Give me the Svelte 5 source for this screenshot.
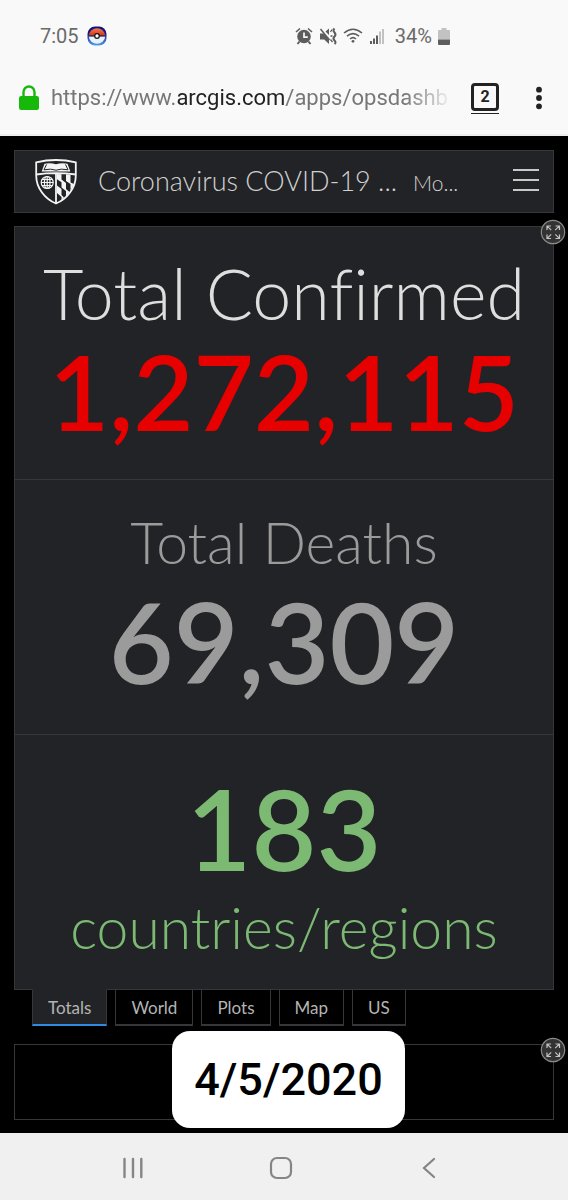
<script>
  const tabs = ['Totals', 'World', 'Plots', 'Map', 'US'];
  let active = $state('Totals');
</script>

{#snippet expandIcon()}
  <svg width="26" height="26" viewBox="0 0 26 26" fill="none" aria-hidden="true">
    <circle cx="13" cy="13" r="11.7" fill="#333" stroke="#8b8b8b" stroke-width="1.2" />
    <path
      d="M7 11V7h4M7.400 7.400l3.800 3.800M15.500 7h4v4M19 7.400l-3.800 3.800M7 15.500v4h4M7.400 19.100l3.800-3.800M19.500 15.500v4h-4M19.100 19.100l-3.800-3.800"
      stroke="#c4c4c4" stroke-width="1.2" />
  </svg>
{/snippet}

<div class="screen">
  <header class="browser">
    <div class="status">
      <span class="time">7:05</span>
      <svg class="ball" width="20" height="20" viewBox="0 0 20 20" aria-hidden="true">
        <defs>
          <linearGradient id="ring" x2="0" y2="1">
            <stop offset=".35" stop-color="#13127f" /><stop offset="1" stop-color="#4ba1ef" />
          </linearGradient>
          <linearGradient id="cap" x2="0" y2="1">
            <stop stop-color="#f47a50" /><stop offset="1" stop-color="#cb3219" />
          </linearGradient>
        </defs>
        <rect x=".5" y=".5" width="19" height="19" rx="7.500" fill="url(#ring)" />
        <path d="M1.800 10a8.200 7.800 0 0 1 16.400 0z" fill="url(#cap)" />
        <path d="M1.800 10a8.200 7.800 0 0 0 16.400 0z" fill="#e8f2fa" />
        <path d="M1.800 10h16.400" stroke="#231c38" stroke-width="1.200" />
        <circle cx="10" cy="10" r="2.300" fill="#fff" stroke="#171717" stroke-width="1.300" />
      </svg>
      <div class="indicators">
        <svg width="18" height="18" viewBox="0 0 18 18" aria-hidden="true">
          <path d="M4.500 14.500L2.500 17M13.500 14.500l2 2.500" stroke="#5d5d5d" stroke-width="2" />
          <path d="M1 5L5 1.500M13 1.500L17 5" stroke="#5d5d5d" stroke-width="1.600" />
          <circle cx="9" cy="9.500" r="6.800" fill="#5d5d5d" />
          <path d="M9 5.500v4.700h3.800" fill="none" stroke="#f8f8f8" stroke-width="1.700" />
        </svg>
        <svg width="18" height="18" viewBox="0 0 18 18" fill="none" aria-hidden="true">
          <path d="M1 6.500h3.500L10 11.500V17l-4.800-4.500H1zM6.500 4.500L10 1.500V8z" fill="#5d5d5d" />
          <path d="M1.500 2l9 11" stroke="#5d5d5d" stroke-width="1.500" />
          <path d="M15.500 1.500q-2 2 0 4t0 4 0 4 0 3.500" stroke="#5d5d5d" stroke-width="2" />
          <path d="M11.500 5l1.500-2.500M11.500 9h2M11.500 12.500l2 2.500" stroke="#5d5d5d" stroke-width="1.300" />
        </svg>
        <svg width="20" height="18" viewBox="0 0 20 18" fill="none" stroke="#5d5d5d" stroke-width="1.600" aria-hidden="true">
          <path d="M1 6q9-7.500 18 0M4 9.200q6-5.200 12 0M7 12q3-2.600 6 0" />
          <circle cx="10" cy="14.300" r="1.400" fill="#5d5d5d" stroke="none" />
        </svg>
        <svg width="16" height="18" viewBox="0 0 16 18" aria-hidden="true">
          <path d="M1 14h2v3H1zM4 11.500h2V17H4zM7 8.500h2V17H7z" fill="#5d5d5d" />
          <path d="M10 4.500h2V17h-2zM13 2h2v15h-2z" fill="#c2c2c2" />
        </svg>
        <span class="charge">34%</span>
        <svg width="12" height="18" viewBox="0 0 12 18" aria-hidden="true">
          <path d="M3.500 1h5v2H11a1 1 0 0 1 1 1v8.500H0V4a1 1 0 0 1 1-1h2.500z" fill="#c2c2c2" />
          <path d="M0 12.500h12V17a1 1 0 0 1-1 1H1a1 1 0 0 1-1-1z" fill="#5d5d5d" />
        </svg>
      </div>
    </div>
    <div class="toolbar">
      <svg width="20" height="26" viewBox="0 0 20 26" aria-hidden="true">
        <path d="M4.500 12V7a5.500 5.500 0 0 1 11 0v5" fill="none" stroke="#16b90a" stroke-width="2.400" />
        <rect y="11" width="20" height="14" rx="2.200" fill="#16b90a" />
      </svg>
      <button class="address" type="button"><span>https://www.</span><b>arcgis.com</b><span>/apps/opsdashb</span></button>
      <button class="count" type="button"><span>2</span></button>
      <button class="more" type="button" aria-label="Menu">
        <svg width="8" height="24" viewBox="0 0 8 24" fill="#222" aria-hidden="true">
          <circle cx="4" cy="3.700" r="2.900" /><circle cx="4" cy="12" r="2.900" /><circle cx="4" cy="20.300" r="2.900" />
        </svg>
      </button>
    </div>
  </header>

  <main>
    <div class="titlebar">
      <svg class="shield" width="42" height="46" viewBox="0 0 42 46" aria-hidden="true">
        <path d="M21 1C14 1 7 2 1.200 3.400v13C1.200 29 10 40 21 44.500 32 40 40.800 29 40.800 16.400v-13C35 2 28 1 21 1z" fill="#222326" stroke="#f4f4f4" stroke-width="1.800" />
        <path d="M9.500 4.700q6-1.200 11.500.500 5.500-1.700 11.500-.5L35.300 12.500H6.700z" fill="#f4f4f4" />
        <path d="M11.500 5.500L9 10.800q7-1.500 12 .4 5-1.900 12-.4l-2.500-5.300" fill="none" stroke="#222326" stroke-width="1" />
        <path d="M1.200 15.500Q21 12.600 40.800 15.500M21 14v30" fill="none" stroke="#f4f4f4" stroke-width="1.800" />
        <g fill="none" stroke="#f4f4f4" stroke-width="1.200">
          <circle cx="12.200" cy="23.500" r="6" />
          <ellipse cx="12.200" cy="23.500" rx="2.800" ry="6" />
          <path d="M12.200 17.500v12M6.200 23.500h12M7 20.500h10.400M7 26.500h10.400" />
        </g>
        <path d="M22 15l4.500.3v8l-4.500-3zM31 15.300l4.500.5V25L31 22zM26.500 20.500L31 24v8l-4.500-3.500zM35.500 23.500l3.500 1.500-3.500 7zM22 26.500l4.500 3.500v8L22 34zM31 30l3.500 3-3.500 5zM26.500 36l2.500 2.500-2.500 2.500z" fill="#f4f4f4" />
      </svg>
      <h1>Coronavirus COVID-19 ...</h1>
      <span class="subtitle">Mo...</span>
      <button class="menu" type="button" aria-label="Open menu"><i></i><i></i><i></i></button>
    </div>

    <div class="panel totals">
      <button class="expand" type="button" aria-label="Expand">{@render expandIcon()}</button>
      <section class="stat confirmed">
        <h2>Total Confirmed</h2>
        <strong>1,272,115</strong>
      </section>
      <section class="stat deaths">
        <h2>Total Deaths</h2>
        <strong>69,309</strong>
      </section>
      <section class="stat regions">
        <strong>183</strong>
        <h2>countries/regions</h2>
      </section>
    </div>

    <div class="tabs" role="tablist">
      {#each tabs as tab}
        <button type="button" role="tab" aria-selected={active === tab} class:active={active === tab} onclick={() => (active = tab)}>{tab}</button>
      {/each}
    </div>

    <div class="panel lower">
      <button class="expand" type="button" aria-label="Expand">{@render expandIcon()}</button>
      <time class="date" datetime="2020-04-05">4/5/2020</time>
    </div>
  </main>

  <nav>
    <button type="button" aria-label="Recent apps">
      <svg width="24" height="24" viewBox="0 0 24 24" stroke="#858585" stroke-width="2.400" stroke-linecap="round" aria-hidden="true"><path d="M3.500 3v18M12 3v18M20.300 3v18" /></svg>
    </button>
    <button type="button" aria-label="Home">
      <svg width="24" height="24" viewBox="0 0 24 24" fill="none" stroke="#858585" stroke-width="2.200" aria-hidden="true"><rect x="2" y="2" width="20" height="20" rx="6" /></svg>
    </button>
    <button type="button" aria-label="Back">
      <svg width="24" height="24" viewBox="0 0 24 24" fill="none" stroke="#858585" stroke-width="2.200" stroke-linecap="round" aria-hidden="true"><path d="M17 3L7 12l10 9" /></svg>
    </button>
  </nav>
</div>

<style>
  :global(body) {
    margin: 0;
    background: #000;
  }
  .screen {
    display: flex;
    flex-direction: column;
    min-height: 100vh;
    background: #000;
    font-family: Lato, sans-serif;
    font-variant-ligatures: none;
  }
  .screen :global(*) {
    box-sizing: border-box;
  }
  button {
    margin: 0;
    padding: 0;
    border: 0;
    background: none;
    font: inherit;
    color: inherit;
    cursor: pointer;
  }
  svg {
    display: block;
    flex: none;
  }
  .browser {
    background: #f9f9f9;
    border-bottom: 2px solid #eee;
    font-family: Roboto, sans-serif;
  }
  .status {
    display: flex;
    align-items: center;
    height: 60px;
    padding: 12px 118px 0 40px;
    color: #6a6a6a;
    font-size: 20px;
  }
  .ball {
    margin-left: 8px;
  }
  .indicators {
    display: flex;
    align-items: center;
    gap: 6px;
    margin-left: auto;
  }
  .charge {
    margin-left: 4px;
  }
  .toolbar {
    display: flex;
    align-items: center;
    height: 74px;
    padding: 2px 25px 0 19px;
  }
  .address {
    flex: 1;
    min-width: 0;
    margin: 0 18px 0 12px;
    overflow: hidden;
    white-space: nowrap;
    text-align: left;
    font-size: 22px;
    line-height: 32px;
    color: #777;
    mask-image: linear-gradient(to right, #000 calc(100% - 48px), transparent);
  }
  .address b {
    font-weight: 400;
    color: #222;
  }
  .count {
    width: 28px;
    border-bottom: 1px solid #222;
    padding-bottom: 2px;
  }
  .count span {
    display: block;
    border: 3px solid #222;
    border-radius: 4px;
    font-size: 16px;
    font-weight: 700;
    line-height: 22px;
    color: #222;
  }
  .more {
    margin-left: 36px;
  }
  main {
    flex: 1;
    display: flex;
    flex-direction: column;
    padding: 14px 14px 13px;
  }
  .titlebar {
    display: flex;
    align-items: center;
    height: 63px;
    margin-bottom: 13px;
    padding: 0 14px 0 20px;
    border: 1px solid #36373a;
    background: #222326;
    color: #d0d0d0;
  }
  h1 {
    margin: 0 16px 0 21px;
    padding-bottom: 2px;
    font-size: 27px;
    font-weight: 300;
    white-space: nowrap;
  }
  .subtitle {
    padding-top: 2px;
    font-size: 21px;
    font-weight: 300;
  }
  .menu {
    display: grid;
    gap: 8px;
    width: 26px;
    margin-left: auto;
    padding-bottom: 4px;
  }
  .menu i {
    height: 2px;
    background: #c9c9c9;
  }
  .panel {
    position: relative;
    border: 1px solid #36373a;
  }
  .totals {
    flex: 1;
    display: flex;
    flex-direction: column;
    background: #222326;
  }
  .expand {
    position: absolute;
    top: -8px;
    right: -13px;
  }
  .stat {
    flex: 1 1 auto;
    display: flex;
    flex-direction: column;
    align-items: center;
    justify-content: center;
    white-space: nowrap;
  }
  .stat + .stat {
    border-top: 1px solid #36373a;
  }
  h2 {
    margin: 0;
    font-weight: 300;
  }
  strong {
    font-weight: 600;
  }
  .confirmed h2 {
    font-size: 70px;
    line-height: 76px;
    color: #dedede;
  }
  .confirmed strong {
    font-size: 104px;
    line-height: 120px;
    color: #e60000;
  }
  .deaths {
    color: #9b9b9b;
  }
  .deaths h2,
  .regions h2 {
    font-size: 57px;
    line-height: 68px;
  }
  .deaths strong,
  .regions strong {
    font-size: 112px;
    line-height: 130px;
  }
  .regions {
    color: #7cba74;
  }
  .tabs {
    display: flex;
    gap: 8px;
    margin: -1px 0 18px 18px;
  }
  .tabs button {
    height: 37px;
    padding: 0 15px;
    border: 1px solid #36373a;
    border-bottom-width: 2px;
    color: #b4b4b4;
    font-size: 17px;
  }
  .tabs .active {
    position: relative;
    border-top-color: #222326;
    border-bottom-color: #2e8be0;
    background: #222326;
  }
  .lower {
    display: flex;
    justify-content: center;
    height: 76px;
  }
  .date {
    position: absolute;
    top: -14px;
    margin-left: 9px;
    padding: 0 22px;
    border-radius: 18px;
    background: #fff;
    color: #000;
    font: 500 45px/97px Roboto, sans-serif;
  }
  nav {
    display: flex;
    justify-content: center;
    align-items: center;
    gap: 124px;
    height: 67px;
    padding: 2px 6px 0 0;
    background: #f0f0f0;
  }
</style>
